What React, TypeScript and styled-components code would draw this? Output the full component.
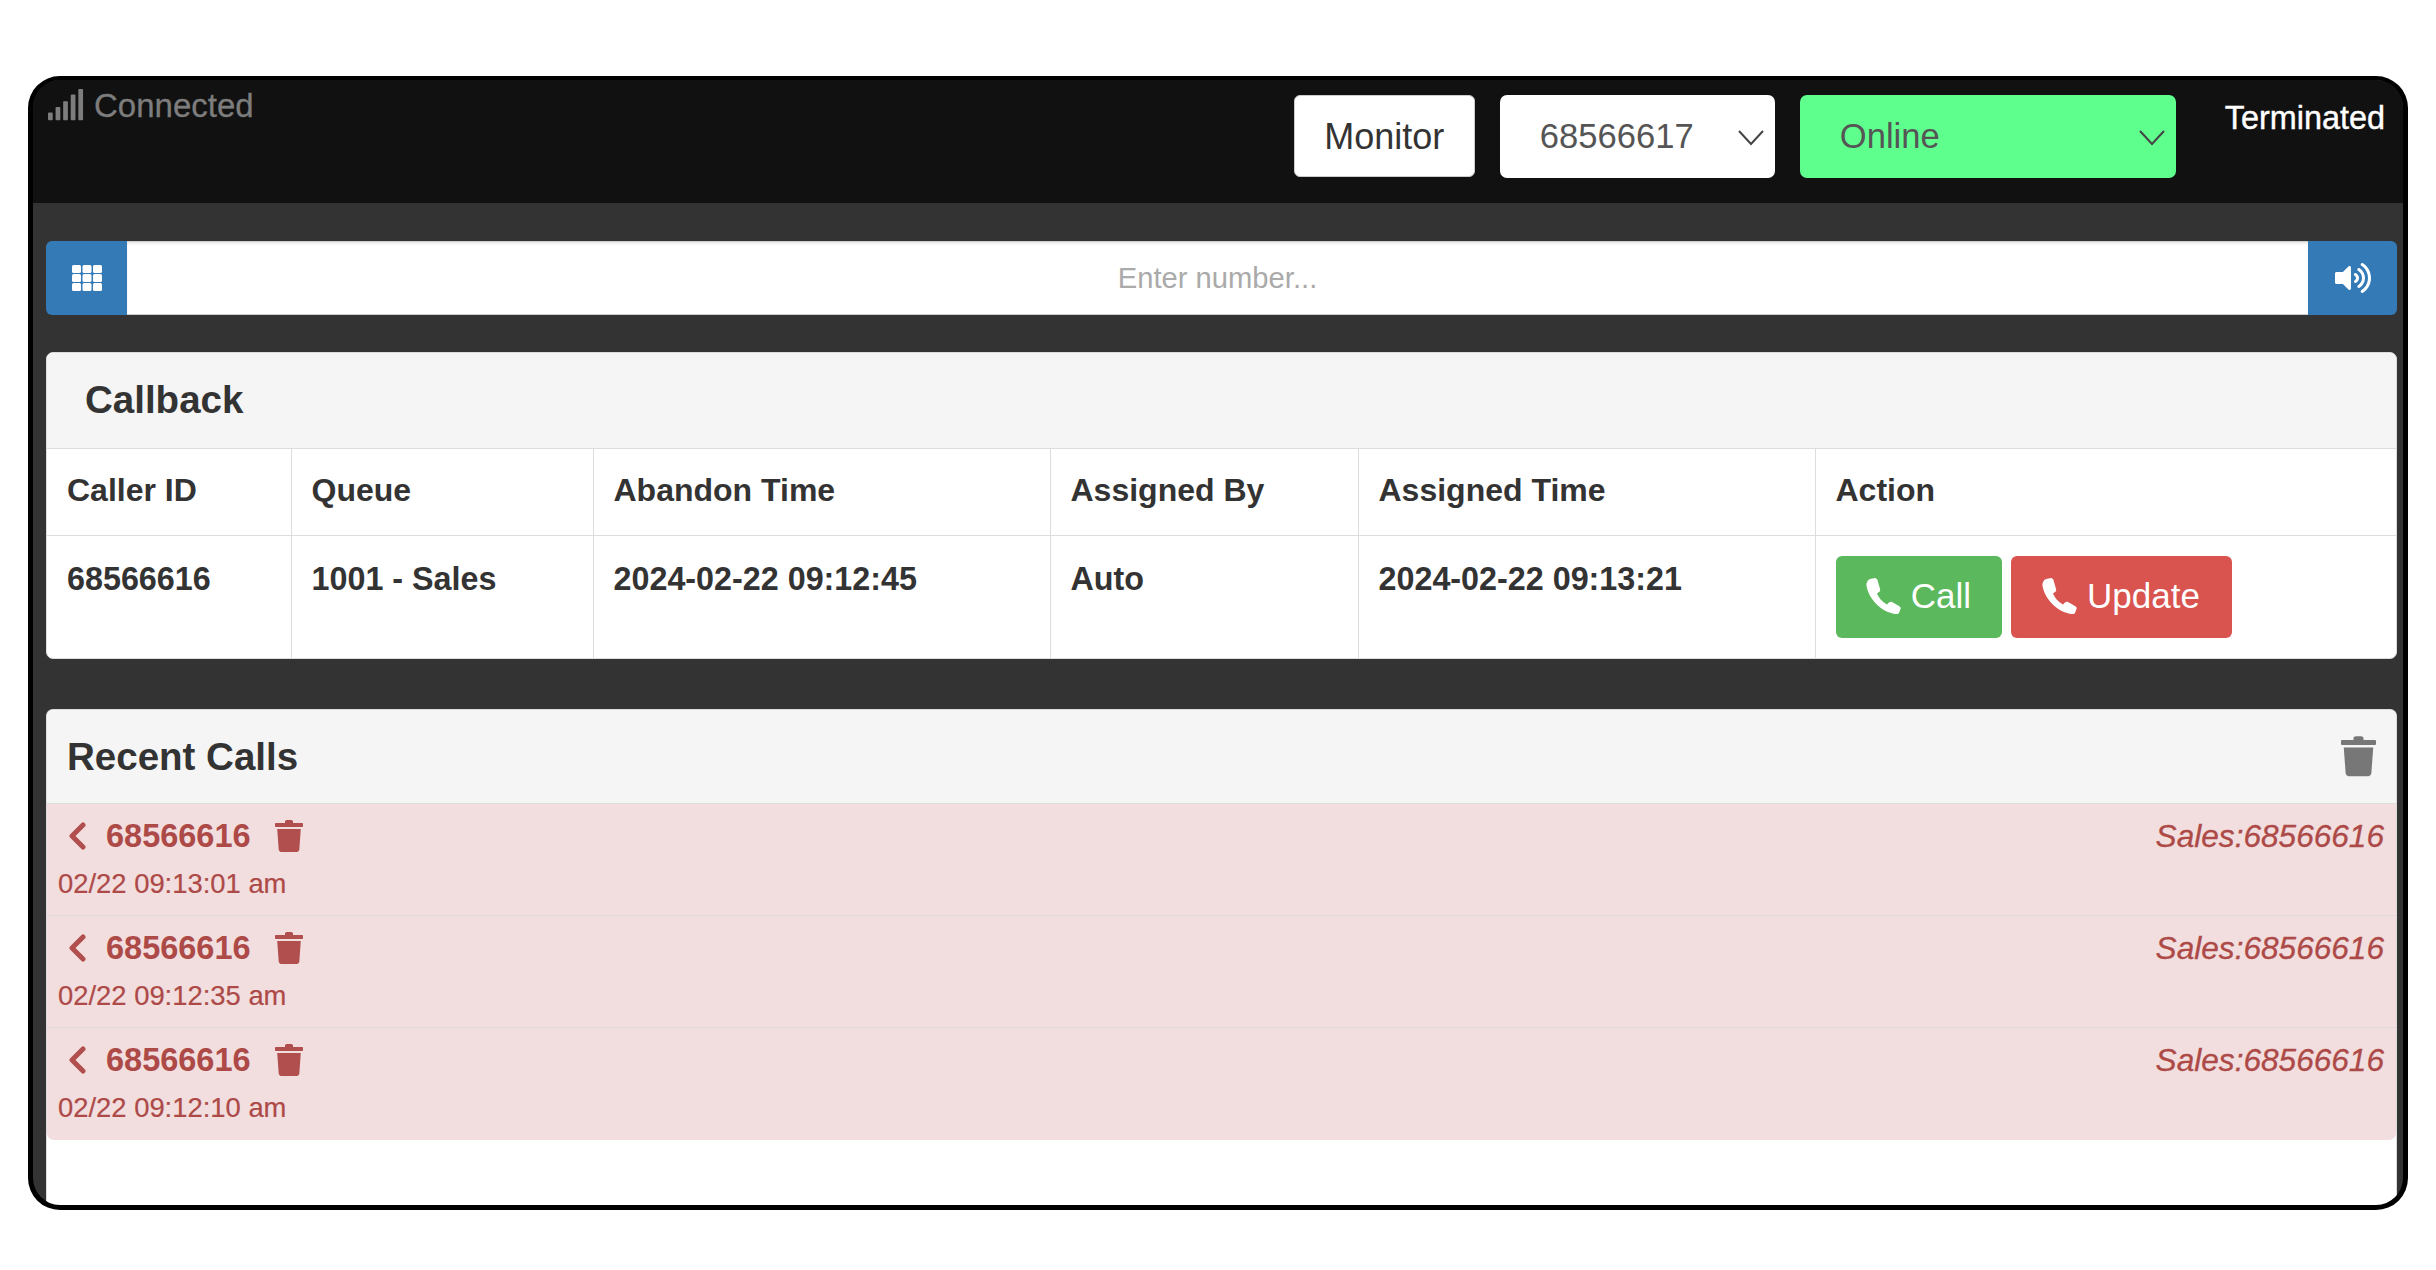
import React from 'react';
import styled, { createGlobalStyle } from 'styled-components';
import { FaVolumeUp } from 'react-icons/fa';

const GlobalStyle = createGlobalStyle`
  html, body {
    margin: 0;
    padding: 0;
    background: #fff;
    font-family: "Liberation Sans", Arial, sans-serif;
  }
`;

const Frame = styled.div`
  box-sizing: border-box;
  width: 2380px;
  height: 1134px;
  margin: 76px 0 0 28px;
  border: 5px solid #000;
  border-top-width: 4px;
  border-radius: 32px;
  background: #333;
  overflow: hidden;
  display: flex;
  flex-direction: column;
`;

const Header = styled.header`
  box-sizing: border-box;
  height: 123px;
  flex: none;
  background: #111;
  display: flex;
  padding: 15px 18px 0 13px;
`;

const Status = styled.div`
  display: flex;
  align-items: flex-start;
  gap: 10px;
  color: #7d7d7d;
  font-size: 33px;
  line-height: 37px;
  margin: -8px auto 0 2px;
  -webkit-text-stroke: 0.3px #7d7d7d;
`;

const Controls = styled.div`
  display: flex;
  align-items: flex-start;
  gap: 25px;
`;

const MonitorButton = styled.button`
  box-sizing: border-box;
  width: 181px;
  height: 82px;
  border: 1px solid #ccc;
  border-radius: 6px;
  background: #fff;
  color: #333;
  font: 36px "Liberation Sans", Arial, sans-serif;
  padding: 2px 0 0;
`;

const Select = styled.div<{ $width: number; $bg: string; $pad: number }>`
  box-sizing: border-box;
  position: relative;
  width: ${(p) => p.$width}px;
  height: 83px;
  border-radius: 7px;
  background: ${(p) => p.$bg};
  color: #555;
  font-size: 34.6px;
  line-height: 83px;
  padding-left: ${(p) => p.$pad}px;
`;

const Caret = styled.svg`
  position: absolute;
  right: 10px;
  top: 34px;
`;

const Terminated = styled.div`
  color: #fff;
  font-size: 32.4px;
  line-height: 36px;
  margin: 5px 0 0 49px;
  -webkit-text-stroke: 0.4px #fff;
`;

const Body = styled.main`
  flex: 1;
  display: flex;
  flex-direction: column;
  padding: 38px 6px 0 13px;
  min-height: 0;
`;

const DialBar = styled.div`
  display: flex;
  height: 74px;
  flex: none;
`;

const BlueAddon = styled.div<{ $side: 'left' | 'right'; $width: number }>`
  flex: none;
  width: ${(p) => p.$width}px;
  background: #337ab7;
  color: #fff;
  display: flex;
  align-items: center;
  justify-content: center;
  border-radius: ${(p) => (p.$side === 'left' ? '6px 0 0 6px' : '0 6px 6px 0')};
`;

const NumberInput = styled.input`
  flex: 1;
  min-width: 0;
  box-sizing: border-box;
  border: 1px solid #ccc;
  border-width: 1px 0;
  box-shadow: inset 0 2px 2px rgba(0, 0, 0, 0.08);
  background: #fff;
  text-align: center;
  font: 29.2px "Liberation Sans", Arial, sans-serif;
  outline: none;
  padding: 0;
  &::placeholder {
    color: #aaa;
    opacity: 1;
  }
`;

const Panel = styled.section<{ $top: number }>`
  flex: none;
  box-sizing: border-box;
  margin-top: ${(p) => p.$top}px;
  background: #fff;
  border-radius: 7px;
  border: 1px solid #ddd;
  overflow: hidden;
`;

const CallbackHeading = styled.h3`
  box-sizing: border-box;
  margin: 0;
  height: 96px;
  padding: 0 38px;
  background: #f5f5f5;
  border-bottom: 1px solid #ddd;
  color: #333;
  font-size: 38.5px;
  font-weight: bold;
  line-height: 94px;
`;

const Table = styled.table`
  width: 100%;
  border-collapse: collapse;
  table-layout: fixed;
  color: #333;
  font-size: 32.3px;
`;

const HeadCell = styled.th`
  box-sizing: border-box;
  height: 86px;
  padding: 0 20px 2px;
  text-align: left;
  font-size: 32px;
  font-weight: bold;
  border-left: 1px solid #ddd;
  border-bottom: 1px solid #ddd;
  &:first-child {
    border-left: 0;
  }
`;

const DataCell = styled.td`
  box-sizing: border-box;
  height: 123px;
  padding: 19px 20px 20px;
  vertical-align: top;
  font-weight: bold;
  line-height: 48px;
  border-left: 1px solid #ddd;
  &:first-child {
    border-left: 0;
  }
`;

const ActionButton = styled.button<{ $bg: string; $width: number }>`
  box-sizing: border-box;
  width: ${(p) => p.$width}px;
  height: 82px;
  margin: 1px 9px 0 0;
  border: 0;
  border-radius: 6px;
  background: ${(p) => p.$bg};
  color: #fff;
  font: 35px "Liberation Sans", Arial, sans-serif;
  display: inline-flex;
  align-items: center;
  justify-content: center;
  gap: 10px;
  padding: 0 0 2px;
  vertical-align: top;
`;

const RecentPanel = styled(Panel)`
  flex: 1;
  min-height: 0;
  border-bottom: 0;
  border-radius: 7px 7px 0 0;
`;

const RecentHeading = styled.div`
  box-sizing: border-box;
  height: 94px;
  padding: 0 20px 0 20px;
  background: #f5f5f5;
  border-bottom: 1px solid #ddd;
  display: flex;
  align-items: center;
  justify-content: space-between;
  color: #333;
  font-size: 38.5px;
  font-weight: bold;
`;

const CallRow = styled.div`
  box-sizing: border-box;
  height: 112px;
  padding: 11px 12px 0 11px;
  background: #f2dede;
  color: #ad4a48;
  border-bottom: 1px solid #dfd8d8;
  &:last-child {
    border-bottom: 0;
    border-radius: 0 0 7px 7px;
  }
`;

const CallTop = styled.div`
  display: flex;
  align-items: center;
  height: 42px;
  padding-left: 10px;
`;

const CallNumber = styled.span`
  font-size: 32.5px;
  font-weight: bold;
  margin: 0 24px 0 20px;
`;

const CallSource = styled.span`
  margin-left: auto;
  font-size: 31.6px;
  font-style: italic;
  -webkit-text-stroke: 0.3px #ad4a48;
`;

const CallTime = styled.div`
  font-size: 27.4px;
  line-height: 32px;
  margin-top: 11px;
  -webkit-text-stroke: 0.2px #ad4a48;
`;

const SignalIcon = () => (
  <svg width="36" height="34" viewBox="0 0 38 34" fill="#7d7d7d" style={{ marginTop: 1 }}>
    <rect x="0" y="25" width="5" height="8" rx="1" />
    <rect x="8" y="19" width="5" height="14" rx="1" />
    <rect x="16" y="13" width="5" height="20" rx="1" />
    <rect x="24" y="6" width="5" height="27" rx="1" />
    <rect x="32" y="0" width="5" height="33" rx="1" />
  </svg>
);

const GridIcon = () => (
  <svg width="30" height="26" viewBox="0 0 30 26" fill="#fff">
    {[0, 1, 2].map((r) =>
      [0, 1, 2].map((c) => (
        <rect key={`${r}-${c}`} x={c * 10.5} y={r * 9} width="9" height="8" rx="1.5" />
      )),
    )}
  </svg>
);

const PhoneIcon = () => (
  <svg width="35" height="36" viewBox="0 0 35 36" fill="#fff">
    <path d="M4 1 L9 0 C10 0 11 1 11.5 2 L14 11 C14.5 12.5 14 13.5 13 14 L11 15.5 C13 20 16 24 21 26.5 L23 24.5 C24 23.5 25 23.5 26 24 L33 28 C34.5 29 35 30 34.5 31 L33 35 C32.5 36 31 36 30 36 C17 35 3 22 .5 8 C0 5 1.5 2 4 1 Z" />
  </svg>
);

const TrashIcon = ({ color, width }: { color: string; width: number }) => (
  <svg width={width} height={width * 1.15} viewBox="0 0 28 32" fill={color}>
    <path d="M10 1.5 C10 .6 11 0 12 0 H16 C17 0 18 .6 18 1.5 V3 H27 C27.6 3 28 3.4 28 4 V6 C28 6.6 27.6 7 27 7 H1 C.4 7 0 6.6 0 6 V4 C0 3.4 .4 3 1 3 H10 Z" />
    <path d="M2.2 9 H25.8 L24.3 29.5 C24.2 31 23 32 21.6 32 H6.4 C5 32 3.8 31 3.7 29.5 Z" />
  </svg>
);

const ChevronIcon = () => (
  <svg width="18" height="28" viewBox="0 0 18 28" fill="none" stroke="#b14e4e" strokeWidth="5" strokeLinecap="round" strokeLinejoin="round">
    <path d="M15 3 L4 14 L15 25" />
  </svg>
);

const CaretIcon = () => (
  <Caret width="28" height="18" viewBox="0 0 28 18" fill="none" stroke="#444" strokeWidth="2">
    <path d="M2 2 L14 15 L26 2" />
  </Caret>
);

const calls = ['02/22 09:13:01 am', '02/22 09:12:35 am', '02/22 09:12:10 am'];

export default function App() {
  return (
    <>
      <GlobalStyle />
      <Frame>
        <Header>
          <Status>
            <SignalIcon />
            Connected
          </Status>
          <Controls>
            <MonitorButton>Monitor</MonitorButton>
            <Select $width={275} $bg="#fff" $pad={40}>
              68566617
              <CaretIcon />
            </Select>
            <Select $width={376} $bg="#5fff8e" $pad={40}>
              Online
              <CaretIcon />
            </Select>
          </Controls>
          <Terminated>Terminated</Terminated>
        </Header>
        <Body>
          <DialBar>
            <BlueAddon $side="left" $width={81}>
              <GridIcon />
            </BlueAddon>
            <NumberInput placeholder="Enter number..." />
            <BlueAddon $side="right" $width={89}>
              <FaVolumeUp size={36} />
            </BlueAddon>
          </DialBar>
          <Panel $top={37}>
            <CallbackHeading>Callback</CallbackHeading>
            <Table>
              <colgroup>
                <col style={{ width: 244 }} />
                <col style={{ width: 302 }} />
                <col style={{ width: 457 }} />
                <col style={{ width: 308 }} />
                <col style={{ width: 457 }} />
                <col />
              </colgroup>
              <thead>
                <tr>
                  <HeadCell>Caller ID</HeadCell>
                  <HeadCell>Queue</HeadCell>
                  <HeadCell>Abandon Time</HeadCell>
                  <HeadCell>Assigned By</HeadCell>
                  <HeadCell>Assigned Time</HeadCell>
                  <HeadCell>Action</HeadCell>
                </tr>
              </thead>
              <tbody>
                <tr>
                  <DataCell>68566616</DataCell>
                  <DataCell>1001 - Sales</DataCell>
                  <DataCell>2024-02-22 09:12:45</DataCell>
                  <DataCell>Auto</DataCell>
                  <DataCell>2024-02-22 09:13:21</DataCell>
                  <DataCell>
                    <ActionButton $bg="#5cb85c" $width={166}>
                      <PhoneIcon />
                      Call
                    </ActionButton>
                    <ActionButton $bg="#d9534f" $width={221}>
                      <PhoneIcon />
                      Update
                    </ActionButton>
                  </DataCell>
                </tr>
              </tbody>
            </Table>
          </Panel>
          <RecentPanel $top={50}>
            <RecentHeading>
              Recent Calls
              <TrashIcon color="#777" width={35} />
            </RecentHeading>
            {calls.map((time) => (
              <CallRow key={time}>
                <CallTop>
                  <ChevronIcon />
                  <CallNumber>68566616</CallNumber>
                  <TrashIcon color="#b14e4e" width={28} />
                  <CallSource>Sales:68566616</CallSource>
                </CallTop>
                <CallTime>{time}</CallTime>
              </CallRow>
            ))}
          </RecentPanel>
        </Body>
      </Frame>
    </>
  );
}
